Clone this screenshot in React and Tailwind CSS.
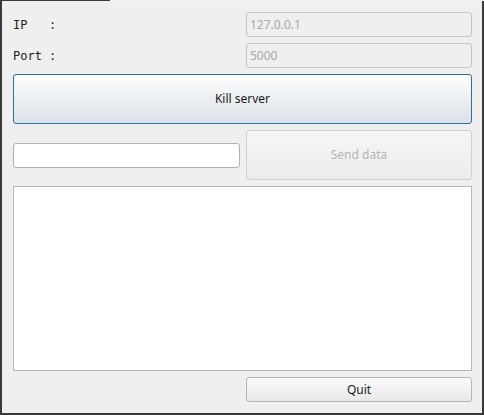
export default function App() {
  const ui = { fontFamily: '"Noto Sans", "Open Sans", sans-serif' };
  const mono = { fontFamily: '"DejaVu Sans Mono", "Liberation Mono", monospace' };
  return (
    <div className="w-[484px] h-[415px] bg-[#3a3a3a] flex flex-col pl-[2px] pr-[2px] pb-[2px]" style={ui}>
      <div className="h-[1px] flex -mx-[2px]">
        <div className="w-[110px] bg-[#3a3a3a]" />
        <div className="flex-1 bg-[#f4f4f4]" />
      </div>
      <div className="flex-1 bg-[#efefef] pl-[11px] pr-[10px] pt-[11px] flex flex-col gap-[6px]">
        <div className="flex gap-[6px] h-[25px]">
          <div className="flex-1 flex items-center text-[12px] text-[#222] whitespace-pre" style={mono}>IP   :</div>
          <div className="w-[226px] rounded-[3px] border border-[#c6c6c6] bg-[#efefef] flex items-center px-[3px] text-[12px] text-[#a8a8a8]">127.0.0.1</div>
        </div>
        <div className="flex gap-[6px] h-[25px]">
          <div className="flex-1 flex items-center text-[12px] text-[#222] whitespace-pre" style={mono}>Port :</div>
          <div className="w-[226px] rounded-[3px] border border-[#c6c6c6] bg-[#efefef] flex items-center px-[3px] text-[12px] text-[#a8a8a8]">5000</div>
        </div>
        <div className="h-[50px] rounded-[3px] border border-[#2d6f9f] bg-gradient-to-b from-[#fdfdfd] to-[#dce2e8] flex items-center justify-center text-[12px] text-[#1a1a1a]">Kill server</div>
        <div className="flex gap-[6px] h-[50px] items-center">
          <div className="flex-1 h-[25px] rounded-[3px] border border-[#b0b0b0] bg-white" />
          <div className="w-[226px] h-[50px] rounded-[3px] border border-[#cfcfcf] bg-gradient-to-b from-[#f6f6f6] to-[#ececec] flex items-center justify-center text-[12px] text-[#b4b4b4]">Send data</div>
        </div>
        <div className="h-[185px] border border-[#b8b8b8] bg-white" />
        <div className="flex justify-end">
          <div className="w-[226px] h-[25px] rounded-[3px] border border-[#b4b4b4] bg-gradient-to-b from-[#fafafa] to-[#e8e8e8] flex items-center justify-center text-[12px] text-[#1a1a1a]">Quit</div>
        </div>
      </div>
    </div>
  );
}
